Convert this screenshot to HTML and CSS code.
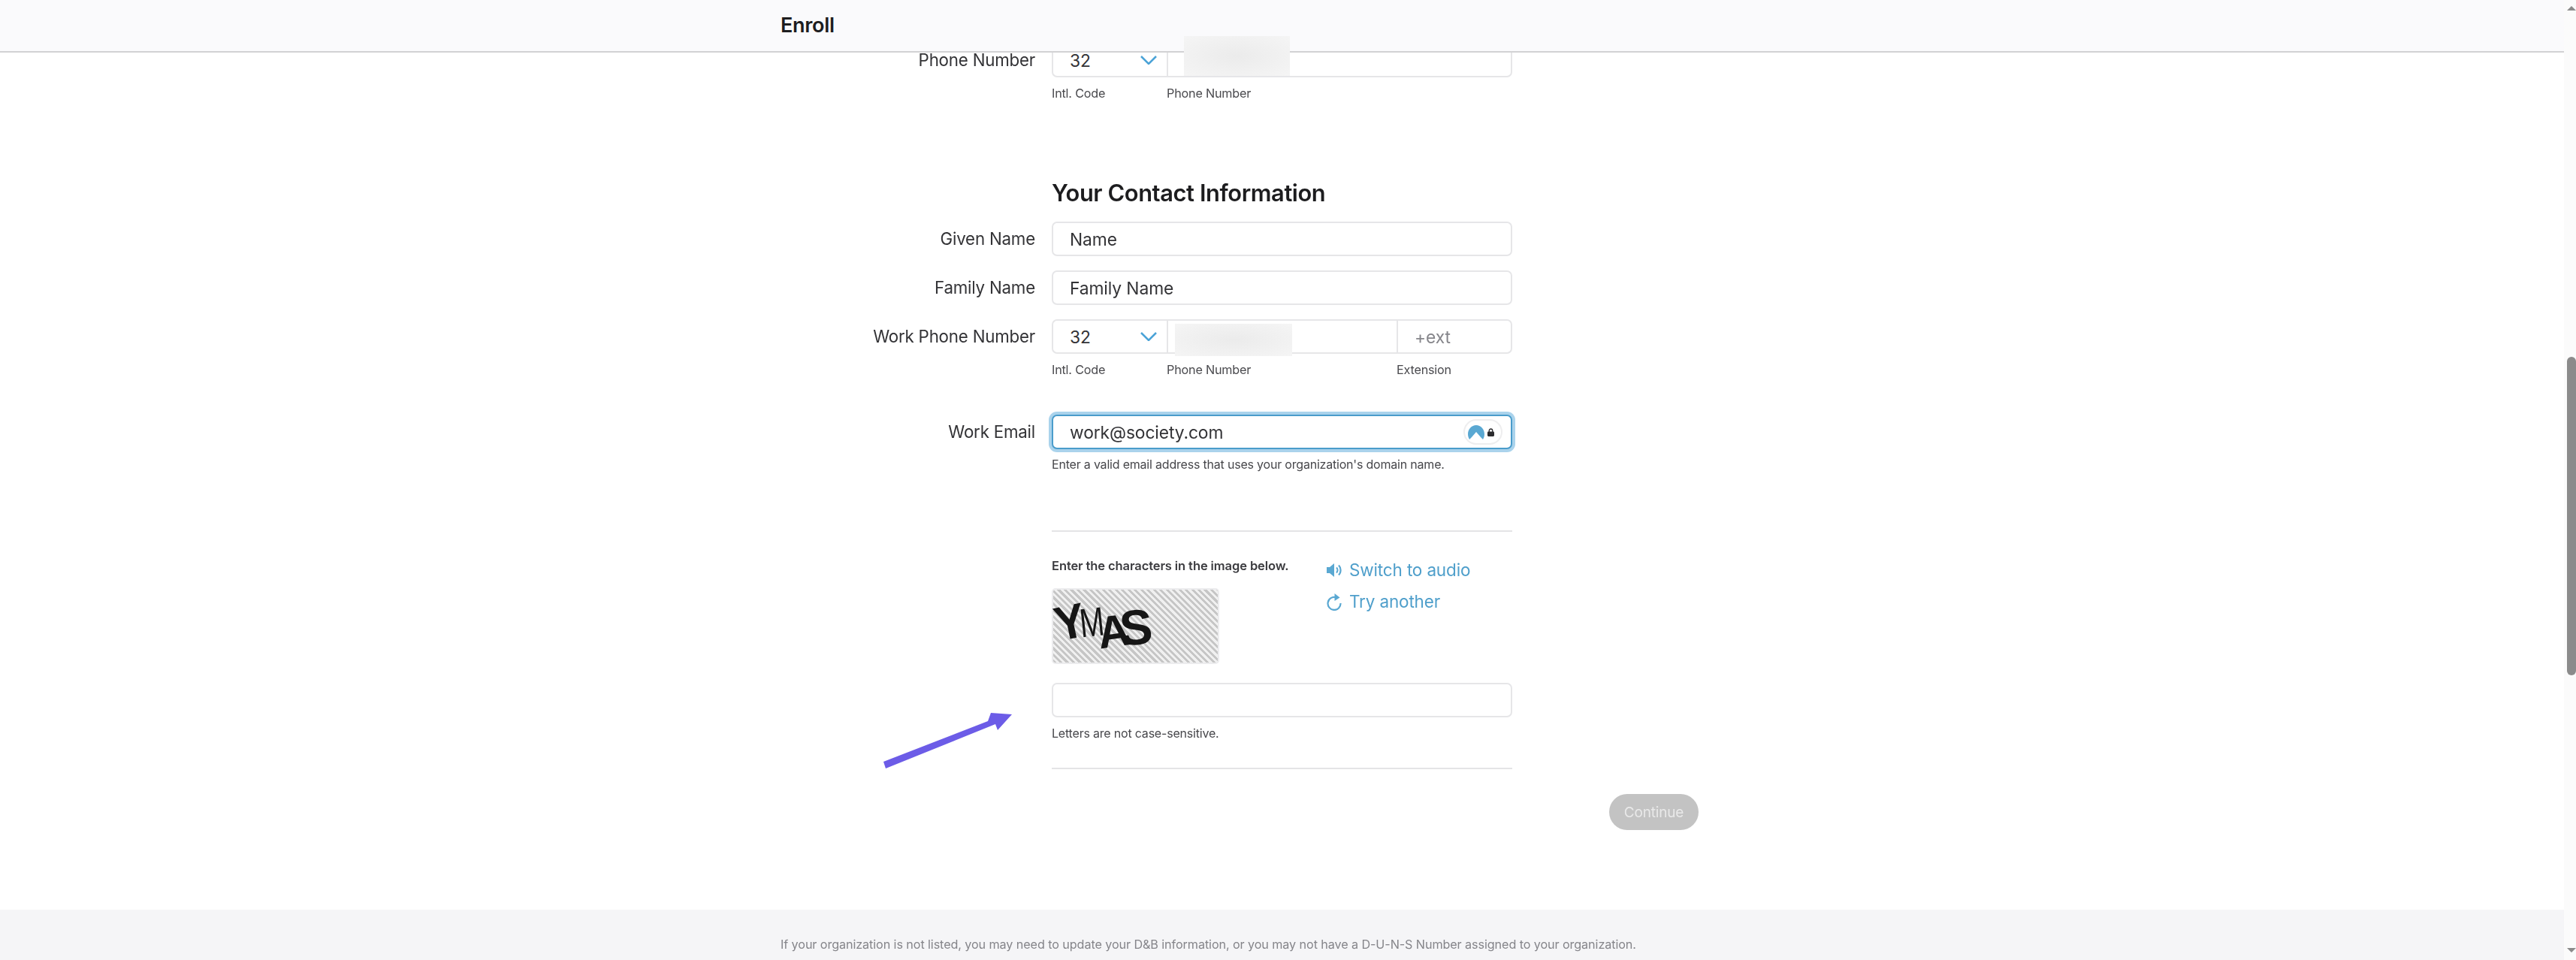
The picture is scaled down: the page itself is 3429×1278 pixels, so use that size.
FILE: index.html
```html
<!DOCTYPE html>
<html lang="en">
<head>
<meta charset="utf-8">
<title>Enroll</title>
<link rel="stylesheet" href="styles.css">
</head>
<body>
<div class="app">
  <main class="main">
    <header class="topbar"><div class="wrap"><span class="topbar-title">Enroll</span></div></header>
    <div class="content">
      <div class="wrap form">
        <div class="row">
          <label class="label">Phone Number</label>
          <div class="field">
            <div class="group">
              <div class="cell cell-code"><span>32</span><svg class="chev" viewBox="0 0 22 12"><path d="M1 1l10 10L21 1"/></svg></div>
              <input class="cell cell-phone" type="text" aria-label="Phone Number">
            </div>
            <div class="subs"><span class="sub sub-code">Intl. Code</span><span class="sub sub-phone">Phone Number</span></div>
            <div class="redact redact-a"></div>
          </div>
        </div>

        <h2 class="heading">Your Contact Information</h2>

        <div class="row row-plain">
          <label class="label">Given Name</label>
          <div class="field"><input class="input" type="text" value="Name"></div>
        </div>
        <div class="row row-plain">
          <label class="label">Family Name</label>
          <div class="field"><input class="input" type="text" value="Family Name"></div>
        </div>
        <div class="row row-plain">
          <label class="label">Work Phone Number</label>
          <div class="field">
            <div class="group">
              <div class="cell cell-code"><span>32</span><svg class="chev" viewBox="0 0 22 12"><path d="M1 1l10 10L21 1"/></svg></div>
              <input class="cell cell-phone cell-grow" type="text" aria-label="Phone Number">
              <input class="cell cell-ext" type="text" placeholder="+ext" aria-label="Extension">
            </div>
            <div class="subs"><span class="sub sub-code">Intl. Code</span><span class="sub sub-phone sub-phone-wide">Phone Number</span><span class="sub">Extension</span></div>
            <div class="redact redact-b"></div>
          </div>
        </div>
        <div class="row row-email">
          <label class="label">Work Email</label>
          <div class="field">
            <div class="email-box">
              <input class="input input-focus" type="text" value="work@society.com">
              <span class="pass-badge">
                <svg class="pass-logo" viewBox="0 0 22 19"><path d="M0 12C0 5 5 0 11 0s11 5 11 12c0 3-1 5-2 7l-3-3-6-7-6 7-3 3c-1-2-2-4-2-7z"/></svg>
                <svg class="pass-lock" viewBox="0 0 10 12"><path class="lock-arc" d="M2.500 6V3.500a2.500 2.500 0 0 1 5 0V6"/><rect y="5" width="10" height="7" rx="1.500"/></svg>
              </span>
            </div>
            <p class="help">Enter a valid email address that uses your organization's domain name.</p>
          </div>
        </div>

        <div class="captcha">
          <div class="spacer"></div>
          <div class="field">
            <hr class="rule">
            <div class="captcha-top">
              <div class="captcha-left">
                <p class="captcha-title">Enter the characters in the image below.</p>
                <div class="captcha-img" role="img" aria-label="captcha">
                  <span class="cl cl-y">Y</span><span class="cl cl-m">M</span><span class="cl cl-a">A</span><span class="cl cl-s">S</span>
                </div>
              </div>
              <div class="captcha-links">
                <a class="link">
                  <svg class="link-icon" viewBox="0 0 22 22"><path class="fill" d="M1 7h4l6-5v18l-6-5H1z"/><path class="line" d="M14 7.500a5 5 0 0 1 0 7M17 4.500a9.500 9.500 0 0 1 0 13"/></svg>
                  Switch to audio
                </a>
                <a class="link">
                  <svg class="link-icon" viewBox="0 0 22 24"><path class="line" d="M13 6.200A8.500 8.500 0 1 0 19.500 14"/><path class="fill" d="M11.500 1l7 5.500-7 4.500z"/></svg>
                  Try another
                </a>
              </div>
            </div>
            <input class="input input-captcha" type="text" aria-label="Characters">
            <p class="help help-case">Letters are not case-sensitive.</p>
            <hr class="rule rule-end">
          </div>
        </div>

        <div class="actions"><button class="btn" type="button" disabled>Continue</button></div>
      </div>
    </div>
    <footer class="foot"><div class="wrap"><p class="foot-text">If your organization is not listed, you may need to update your D&amp;B information, or you may not have a D-U-N-S Number assigned to your organization.</p></div></footer>
    <svg class="arrow" viewBox="0 0 185 85"><polygon points="6,69 9,78 155,19 158,27 177,6 149,4 145,15"/></svg>
  </main>
  <aside class="scrollbar">
    <span class="sb-up"></span>
    <span class="sb-thumb"></span>
    <span class="sb-down"></span>
  </aside>
</div>
</body>
</html>
```
FILE: styles.css
```css
* { box-sizing: border-box; }
html, body { margin: 0; height: 100%; overflow: hidden; background: #fff; }
body { font-family: Inter, "Liberation Sans", sans-serif; color: #1d1d1f; }
.app { display: flex; height: 1278px; filter: blur(0.55px); }
.main { flex: 1; min-width: 0; position: relative; overflow: hidden; display: flex; flex-direction: column; }
.wrap { width: 1335px; margin: 0 auto; }

.topbar { position: relative; z-index: 1; height: 70px; background: #fafafc; border-bottom: 2px solid #d2d2d4; display: flex; align-items: center; flex: none; }
.topbar-title { font-size: 27px; font-weight: 600; line-height: 66px; letter-spacing: -0.3px; }

.content { flex: none; height: 1141px; }
.form { margin-top: -13px; display: flex; flex-direction: column; }
.row, .captcha { display: grid; grid-template-columns: 339px 613px; column-gap: 22px; }
.row-plain { margin-top: 19px; }
.row-email { margin-top: 49px; }
.label { font-size: 22.300px; color: #333336; text-align: right; line-height: 46px; height: 46px; letter-spacing: -0.2px; }
.field { position: relative; }

.input, .cell { font: inherit; font-size: 22.800px; color: #333336; background: #fff; outline: none; letter-spacing: -0.1px; }
.input { display: block; width: 100%; height: 46px; border: 2px solid #e6e6e8; border-radius: 7px; padding: 0 22px; }
.input-focus { border-color: #4a9ccb; box-shadow: 0 0 0 4px #aad3ec; }
.group { display: flex; height: 46px; }
.cell { height: 46px; border: 2px solid #e6e6e8; }
.cell-code { width: 153px; flex: none; border-radius: 7px 0 0 7px; border-right: 0; padding: 0 13px 0 22px; display: flex; align-items: center; justify-content: space-between; }
.chev { width: 22px; height: 12px; fill: none; stroke: #4ba3d7; stroke-width: 2.500; }
.cell-phone { flex: 1; min-width: 0; border-radius: 0 7px 7px 0; padding: 0 20px; }
.cell-grow { border-radius: 0; border-right: 0; }
.cell-ext { width: 154px; flex: none; border-radius: 0 7px 7px 0; padding: 0 22px; }
.cell-ext::placeholder { color: #86868b; opacity: 1; }

.subs { display: flex; margin-top: 10px; height: 22px; }
.sub { font-size: 16.200px; color: #4a4a4e; line-height: 22px; letter-spacing: -0.2px; }
.sub-code { width: 153px; flex: none; }
.sub-phone { flex: none; }
.sub-phone-wide { width: 306px; }

.redact { position: absolute; z-index: 2; background: radial-gradient(ellipse at center, #ebebeb 0%, #f1f1f1 60%, #f5f5f5 100%); }
.redact-a { left: 176px; top: -9px; width: 141px; height: 53px; }
.redact-b { left: 164px; top: 6px; width: 156px; height: 43px; }

.heading { margin: 100px 0 0 361px; font-size: 30.800px; font-weight: 600; line-height: 44px; height: 44px; letter-spacing: -0.4px; color: #1d1d1f; }
.heading + .row-plain { margin-top: 16px; }

.email-box { position: relative; }
.pass-badge { position: absolute; top: 6px; right: 13px; width: 52px; height: 34px; background: #fff; border: 2px solid #eeeeef; border-radius: 17px; display: flex; align-items: center; padding-left: 4px; gap: 4px; }
.pass-logo { width: 22px; height: 19px; fill: #5aa8d2; }
.pass-lock { width: 9px; height: 11px; fill: #2b2b2e; }
.lock-arc { fill: none; stroke: #2b2b2e; stroke-width: 1.500; }
.help { margin: 9px 0 0; font-size: 16px; line-height: 22px; color: #47474b; letter-spacing: -0.2px; }

.rule { margin: 0; border: 0; height: 2px; background: #e4e4e6; }
.captcha > .field > .rule:first-child { margin-top: 77px; }
.captcha-top { display: flex; }
.captcha-left { width: 365px; flex: none; }
.captcha-title { margin: 34px 0 0; font-size: 16.500px; line-height: 22px; font-weight: 600; color: #3b3b3f; letter-spacing: -0.1px; white-space: nowrap; }
.captcha-img { margin-top: 19px; width: 223px; height: 101px; border: 2px solid #ececee; border-radius: 5px; background: repeating-linear-gradient(45deg, #c6c6c6 0 3px, #f0f0f0 3px 6px); display: flex; align-items: flex-start; padding: 8px 0 0 1px; }
.cl { display: block; font-family: "Liberation Sans", sans-serif; font-weight: 700; color: #161616; line-height: 1; }
.cl-y { font-size: 64px; transform: rotate(-12deg) scaleX(.95); margin-top: 3px; }
.cl-m { font-size: 54px; font-weight: 400; transform: rotate(-6deg) scaleX(.72); margin: 8px -15px 0 -15px; }
.cl-a { font-size: 60px; transform: rotate(-8deg); margin: 18px -14px 0 0; }
.cl-s { font-size: 66px; transform: rotate(-4deg); margin-top: 9px; }
.captcha-links { display: flex; flex-direction: column; margin-top: 36px; gap: 13px; }
.link { display: flex; align-items: center; gap: 9px; font-size: 22.500px; line-height: 29px; color: #4f9fcb; letter-spacing: -0.15px; white-space: nowrap; }
.link-icon { width: 22px; height: 24px; flex: none; }
.link-icon .fill { fill: #5aa8d2; }
.link-icon .line { fill: none; stroke: #5aa8d2; stroke-width: 2.200; }
.input-captcha { margin-top: 25px; }
.help-case { margin-top: 10px; }
.rule-end { margin-top: 35px; }

.actions { width: 1222px; display: flex; justify-content: flex-end; margin-top: 33px; }
.btn { width: 119px; height: 48px; border: 0; border-radius: 24px; background: #c3c3c3; color: #e9e9e9; font: inherit; font-size: 19px; letter-spacing: -0.2px; padding: 0; }

.foot { flex: none; height: 67px; background: #f5f5f7; padding-top: 35px; }
.foot-text { margin: 0; font-size: 16.200px; line-height: 22px; color: #85858a; white-space: nowrap; letter-spacing: -0.1px; }

.arrow { position: absolute; left: 1170px; top: 945px; width: 185px; height: 85px; fill: #6c5ce7; z-index: 2; }

.scrollbar { width: 16px; flex: none; background: #fbfbfb; display: flex; flex-direction: column; align-items: flex-end; }
.sb-up { margin-top: 8px; width: 0; height: 0; border-left: 6px solid transparent; border-right: 6px solid transparent; border-bottom: 6px solid #8b8b8b; }
.sb-thumb { margin-top: 461px; width: 12px; height: 424px; background: #8b8b8b; border-radius: 6px; }
.sb-down { margin-top: 363px; width: 0; height: 0; border-left: 6px solid transparent; border-right: 6px solid transparent; border-top: 6px solid #8b8b8b; }
```
